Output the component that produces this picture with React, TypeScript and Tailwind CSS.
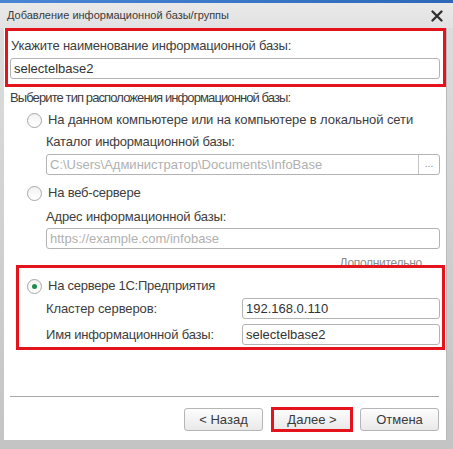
import React from "react";

const font = { fontFamily: '"Liberation Sans", Arial, sans-serif' };

function Radio({ checked = false }: { checked?: boolean }) {
  return (
    <div className="w-[15px] h-[15px] rounded-full border border-[#a6a6a6] bg-gradient-to-b from-[#f2f2f2] to-[#ffffff] flex items-center justify-center shrink-0">
      {checked && <div className="w-[5px] h-[5px] rounded-full bg-[#1f8a4c]" />}
    </div>
  );
}

function Input({ value, placeholder, className = "" }: { value?: string; placeholder?: string; className?: string }) {
  return (
    <div className={"h-[21px] border border-[#b3b3b3] rounded-[3px] bg-white flex items-center pl-[3px] " + className}>
      {value ? (
        <span className="text-[#333333]">{value}</span>
      ) : (
        <span className="text-[#b0b0b0]">{placeholder}</span>
      )}
    </div>
  );
}

function Button({ children }: { children: React.ReactNode }) {
  return (
    <div className="w-full h-[23px] border border-[#b5b5b5] rounded-[3px] bg-gradient-to-b from-[#fdfdfd] to-[#e9e9e9] flex items-center justify-center text-[#3a3a3a]">
      {children}
    </div>
  );
}

export default function App() {
  return (
    <div className="w-[453px] h-[449px] flex flex-col bg-[#d2d2d2] overflow-hidden" style={font}>
      <div className="h-[3px] bg-gradient-to-r from-[#4a86d4] via-[#3a78c8] to-[#2d68b8]" />
      <div className="flex-1 flex flex-col pl-[4px] pr-[6px] pb-[9px] bg-gradient-to-b from-[#dedede] to-[#c4c4c4]">
        <div className="h-[25px] flex items-center justify-between bg-gradient-to-b from-[#e9e9e9] to-[#e2e2e2] -ml-[4px] -mr-[6px] pl-[7px] pr-[10px]">
          <span className="text-[11px] text-[#3a3a3a]">Добавление информационной базы/группы</span>
          <svg width="12" height="12" viewBox="0 0 12 12">
            <path d="M1.5 1.5 L10.5 10.5 M10.5 1.5 L1.5 10.5" stroke="#2f2f2f" strokeWidth="2.3" strokeLinecap="round" />
          </svg>
        </div>
        <div className="flex-1 bg-white flex flex-col text-[13px] leading-[16px] text-[#3d3d3d] border-r border-[#b8b8b8]">
          <div className="ml-[1px] w-[441px] border-[3px] border-[#e3141c] pt-[7px] pb-[5px] pl-[2px] pr-[3px] flex flex-col gap-[4px]">
            <span className="ml-[1px] tracking-[-0.2px]">Укажите наименование информационной базы:</span>
            <Input value="selectelbase2" />
          </div>
          <div className="mt-[3px] pl-[6px] tracking-[-0.9px]">Выберите тип расположения информационной базы:</div>
          <div className="mt-[6px] pl-[23px] flex items-center gap-[6px] h-[16px]">
            <Radio />
            <span className="tracking-[-0.1px]">На данном компьютере или на компьютере в локальной сети</span>
          </div>
          <div className="mt-[6px] pl-[42px] tracking-[-0.2px]">Каталог информационной базы:</div>
          <div className="mt-[4px] ml-[42px] w-[394px] h-[21px] border border-[#b3b3b3] rounded-[3px] flex">
            <div className="flex-1 flex items-center pl-[3px] text-[#b0b0b0]">C:\Users\Администратор\Documents\InfoBase</div>
            <div className="w-[21px] border-l border-[#c4c4c4] flex items-center justify-center text-[10px] text-[#8a8a8a] pb-[2px]">...</div>
          </div>
          <div className="mt-[10px] pl-[23px] flex items-center gap-[6px] h-[16px]">
            <Radio />
            <span className="tracking-[-0.2px]">На веб-сервере</span>
          </div>
          <div className="mt-[8px] pl-[42px] tracking-[-0.15px]">Адрес информационной базы:</div>
          <Input className="mt-[3px] ml-[42px] w-[394px]" placeholder="https://example.com/infobase" />
          <div className="mt-[6px] flex justify-end pr-[15px] h-[16px]">
            <span className="text-[12px] tracking-[-0.3px] text-[#8c8c8c] underline">Дополнительно...</span>
          </div>
          <div className="relative -mt-[6px] ml-[12px] w-[429px] border-[3px] border-[#e3141c] bg-white pt-[10px] pb-[2px] pl-[8px] pr-[2px] flex flex-col">
            <div className="flex items-center gap-[6px] h-[16px]">
              <Radio checked />
              <span className="tracking-[-0.25px]">На сервере 1С:Предприятия</span>
            </div>
            <div className="mt-[4px] flex items-center h-[21px]">
              <span className="pl-[19px] flex-1 tracking-[-0.1px]">Кластер серверов:</span>
              <Input className="w-[198px]" value="192.168.0.110" />
            </div>
            <div className="mt-[5px] flex items-center h-[21px]">
              <span className="pl-[19px] flex-1 tracking-[-0.18px]">Имя информационной базы:</span>
              <Input className="w-[198px]" value="selectelbase2" />
            </div>
          </div>
          <div className="mt-auto ml-[6px] mr-[7px] h-[1px] bg-[#a9a9a9]" />
          <div className="mt-[11px] mb-[9px] flex justify-end pr-[7px]">
            <div className="w-[79px]">
              <Button>&lt; Назад</Button>
            </div>
            <div className="ml-[9px] w-[80px] relative">
              <Button>Далее &gt;</Button>
              <div className="absolute -inset-[1px] border-[3px] border-[#e3141c]" />
            </div>
            <div className="ml-[8px] w-[79px]">
              <Button>Отмена</Button>
            </div>
          </div>
        </div>
      </div>
    </div>
  );
}
